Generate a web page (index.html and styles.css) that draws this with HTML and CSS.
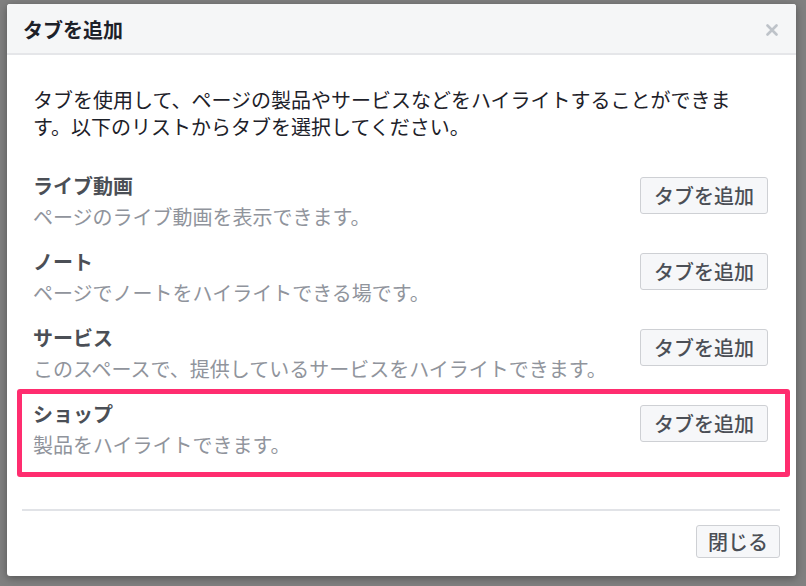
FILE: index.html
```html
<!DOCTYPE html>
<html>
<head lang="ja">
    <meta charset="UTF-8">
    <title>タブを追加</title>
    <link rel="stylesheet" href="styles.css">
</head>
<body>
<div id="dialog">
    <div class="dialog-header">
        <h2 class="dialog-title">タブを追加</h2>
        <span class="close">
            <svg width="12" height="12" viewBox="0 0 12 12"><path d="M1.5 1.5L10.5 10.5M10.5 1.5L1.5 10.5" stroke="#bec3c9" stroke-width="2.6" stroke-linecap="round"/></svg>
        </span>
    </div>
    <div class="dialog-body">
        <p class="intro">タブを使用して、ページの製品やサービスなどをハイライトすることができます。以下のリストからタブを選択してください。</p>
        <ul class="tab-list">
            <li class="tab-item">
                <div class="tab-info">
                    <div class="tab-name">ライブ動画</div>
                    <div class="tab-desc">ページのライブ動画を表示できます。</div>
                </div>
                <button class="btn">タブを追加</button>
            </li>
            <li class="tab-item">
                <div class="tab-info">
                    <div class="tab-name">ノート</div>
                    <div class="tab-desc">ページでノートをハイライトできる場です。</div>
                </div>
                <button class="btn">タブを追加</button>
            </li>
            <li class="tab-item">
                <div class="tab-info">
                    <div class="tab-name">サービス</div>
                    <div class="tab-desc">このスペースで、提供しているサービスをハイライトできます。</div>
                </div>
                <button class="btn">タブを追加</button>
            </li>
            <li class="tab-item highlight">
                <div class="tab-info">
                    <div class="tab-name">ショップ</div>
                    <div class="tab-desc">製品をハイライトできます。</div>
                </div>
                <button class="btn">タブを追加</button>
            </li>
        </ul>
    </div>
    <div class="dialog-footer">
        <button class="btn btn-close">閉じる</button>
    </div>
</div>
</body>
</html>
```

FILE: styles.css
```css
* {
    margin: 0;
    padding: 0;
    box-sizing: border-box;
}

ul {
    list-style: none;
}

body {
    background: #808080;
    padding: 4px 10px 10px 7px;
    font-family: "Noto Sans CJK JP", "Noto Sans", sans-serif;
    font-size: 20px;
    color: #1d2129;
}

#dialog {
    width: 789px;
    height: 572px;
    background: #fff;
    border-radius: 3px;
    box-shadow: 0 2px 8px rgba(0, 0, 0, .35);
    overflow: hidden;
}

.dialog-header {
    height: 51px;
    background: #f5f6f7;
    border-bottom: 2px solid #e5e6e9;
    display: flex;
    align-items: center;
    justify-content: space-between;
    padding: 2px 18px 0 16px;
}

.dialog-title {
    font-size: 20px;
    font-weight: bold;
    line-height: 27px;
    color: #1d2129;
}

.close {
    display: flex;
    margin-top: 1px;
}

.dialog-body {
    padding: 31px 28px 42px 26px;
}

.intro {
    line-height: 27px;
    margin-bottom: 23px;
}

.tab-item {
    display: flex;
    align-items: flex-start;
    justify-content: space-between;
    padding: 7px 0;
    position: relative;
}

.tab-name {
    font-weight: bold;
    color: #4b4f56;
    line-height: 31px;
}

.tab-desc {
    color: #90949c;
    line-height: 31px;
}

.btn {
    font-family: inherit;
    font-size: 20px;
    font-weight: 500;
    color: #4b4f56;
    background: #f6f7f9;
    border: 1px solid #ced0d4;
    border-radius: 3px;
    line-height: 35px;
    padding: 0 13px;
    margin-top: 7px;
}

.highlight::after {
    content: "";
    position: absolute;
    left: -16px;
    right: -22px;
    top: -2px;
    bottom: -10px;
    border: 5px solid #ff2d6f;
    border-radius: 3px;
}

.dialog-footer {
    margin: 0 16px 0 15px;
    border-top: 2px solid #e1e3e7;
    padding-top: 14px;
    display: flex;
    justify-content: flex-end;
}

.btn-close {
    line-height: 31px;
    padding: 0 11px;
    margin-top: 0;
}
```
